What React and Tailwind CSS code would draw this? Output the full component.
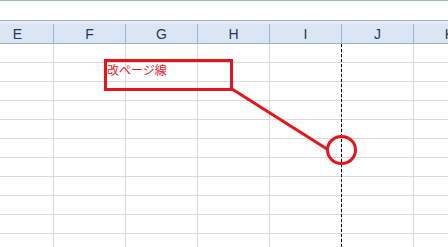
export default function App() {
  const cols = ["E", "F", "G", "H", "I", "J", "K"];
  const rows = Array.from({ length: 11 });
  return (
    <div className="relative w-[448px] h-[247px] overflow-hidden bg-white" style={{ fontFamily: '"Liberation Sans", "Noto Sans CJK JP", sans-serif' }}>
      <div className="h-px bg-[#a3b2c8]" />
      <div className="h-[19px] bg-white" />
      <div className="h-px bg-[#9fb0c8]" />
      <div className="h-[3px] bg-[#e6edf7]" />
      <div className="flex ml-[-18px]">
        {cols.map((c) => (
          <div key={c} className="w-[72px] shrink-0 h-[20px] bg-[#dbe6f4] border-r border-b border-[#9fb2cb] flex items-center justify-center text-[14px] text-[#1c3765] leading-none">
            {c}
          </div>
        ))}
      </div>
      {rows.map((_, i) => (
        <div key={i} className="flex ml-[-18px]">
          {cols.map((c) => (
            <div key={c} className="w-[72px] shrink-0 h-[19px] border-r border-b border-[#dadada]" />
          ))}
        </div>
      ))}
      <svg className="absolute left-0 top-0" width="448" height="247">
        <line x1="341.5" y1="44" x2="341.5" y2="247" stroke="#000" strokeWidth="1" strokeDasharray="3 2" />
        <line x1="232" y1="89" x2="327" y2="149" stroke="#e8141c" strokeWidth="3" />
        <ellipse cx="341.5" cy="150" rx="14" ry="13.5" fill="none" stroke="#e8141c" strokeWidth="3" />
      </svg>
      <div className="absolute left-[104px] top-[59px] w-[129px] h-[32px] border-[3px] border-[#e8141c]">
        <div className="pl-[0px] pt-[1px] text-[12px] leading-[14px] text-[#e8141c]" style={{ fontFamily: '"Noto Sans CJK JP", sans-serif' }}>
          改ページ線
        </div>
      </div>
    </div>
  );
}
